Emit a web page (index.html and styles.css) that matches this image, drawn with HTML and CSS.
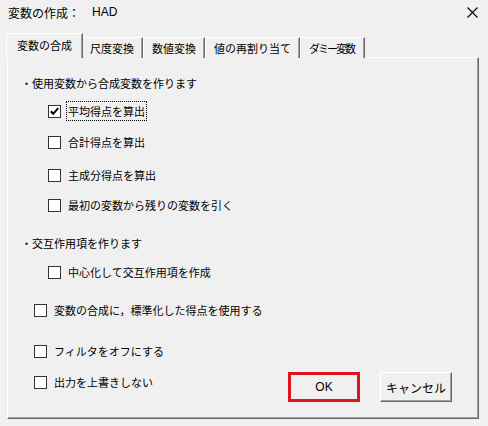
FILE: index.html
```html
<!DOCTYPE html>
<html>
<head>
    <title>変数の作成</title>
    <meta charset='utf-8'>
    <link rel="stylesheet" href="styles.css">
</head>
<body>
    <div class="dialog">
        <div class="titlebar">
            <span class="title">変数の作成：</span>
            <span class="title-name">HAD</span>
            <svg class="close" width="11" height="11" viewBox="0 0 11 11">
                <path d="M0.5 0.5 L10.5 10.5 M10.5 0.5 L0.5 10.5" stroke="#000" stroke-width="1.1" fill="none"/>
            </svg>
        </div>

        <div class="tabs">
            <div class="tab active">変数の合成</div>
            <div class="tab">尺度変換</div>
            <div class="tab">数値変換</div>
            <div class="tab">値の再割り当て</div>
            <div class="tab tab-narrow">ダミー変数</div>
        </div>

        <div class="panel">
            <div class="heading first">・使用変数から合成変数を作ります</div>

            <div class="check indent row-1">
                <span class="box">
                    <svg width="11" height="11" viewBox="0 0 11 11">
                        <path d="M1.8 5.2 L4.2 7.8 L9.2 2.2" stroke="#000" stroke-width="2" fill="none"/>
                    </svg>
                </span>
                <span class="label focus">平均得点を算出</span>
            </div>
            <div class="check indent row-2"><span class="box"></span><span class="label">合計得点を算出</span></div>
            <div class="check indent row-3"><span class="box"></span><span class="label">主成分得点を算出</span></div>
            <div class="check indent row-4"><span class="box"></span><span class="label">最初の変数から残りの変数を引く</span></div>

            <div class="heading second">・交互作用項を作ります</div>
            <div class="check indent row-5"><span class="box"></span><span class="label">中心化して交互作用項を作成</span></div>

            <div class="check row-6"><span class="box"></span><span class="label">変数の合成に，標準化した得点を使用する</span></div>
            <div class="check row-7"><span class="box"></span><span class="label">フィルタをオフにする</span></div>

            <div class="bottom-row">
                <div class="check"><span class="box"></span><span class="label">出力を上書きしない</span></div>
                <div class="buttons">
                    <button class="btn btn-ok">OK</button>
                    <button class="btn">キャンセル</button>
                </div>
            </div>
        </div>
    </div>
</body>
</html>
```

FILE: styles.css
```css
body {
    margin: 0;
    background: #f0f0f0;
    font-family: "Noto Sans CJK JP", "Noto Sans", sans-serif;
    font-size: 11px;
    color: #000;
}
.dialog {
    width: 488px;
    height: 426px;
    background: #f0f0f0;
}
.titlebar {
    height: 24px;
    display: flex;
    align-items: center;
    padding: 0 10px 0 8px;
    font-size: 12px;
}
.title-name {
    margin-left: 12px;
    font-family: "Liberation Sans", sans-serif;
    font-size: 12px;
}
.close {
    margin-left: auto;
}
.tabs {
    display: flex;
    align-items: flex-end;
    height: 24px;
    padding-left: 8px;
    margin-top: 10px;
    position: relative;
    z-index: 1;
}
.tab {
    height: 20px;
    line-height: 20px;
    padding: 0 8px;
    border-top: 1px solid #fff;
    border-left: 1px solid #fff;
    border-right: 1px solid #696969;
    box-shadow: inset -1px 0 #a0a0a0;
    background: #f0f0f0;
    white-space: nowrap;
}
.tab-narrow {
    letter-spacing: -2px;
    padding: 0 10px 0 8px;
}
.tab.active {
    height: 24px;
    line-height: 22px;
    margin: 0 -2px;
    padding: 0 10px;
    position: relative;
    z-index: 2;
}
.panel {
    box-sizing: border-box;
    margin: -1px 9px 0 7px;
    height: 362px;
    border-top: 1px solid #fff;
    border-left: 1px solid #fff;
    border-right: 1px solid #696969;
    border-bottom: 1px solid #696969;
    box-shadow: inset -1px -1px #a0a0a0;
    padding-top: 15px;
}
.heading {
    height: 20px;
    line-height: 20px;
    margin-left: 13px;
}
.heading.second {
    margin-top: 18px;
}
.check {
    display: flex;
    align-items: center;
    height: 20px;
    margin-left: 26px;
}
.check.indent {
    margin-left: 40px;
}
.row-1 { margin-top: 8px; }
.row-2 { margin-top: 11px; }
.row-3 { margin-top: 13px; }
.row-4 { margin-top: 10px; }
.row-5 { margin-top: 9px; }
.row-6 { margin-top: 18px; }
.row-7 { margin-top: 21px; }
.box {
    width: 11px;
    height: 11px;
    border: 1px solid #333;
    background: #fff;
    display: flex;
    align-items: center;
    justify-content: center;
    flex-shrink: 0;
}
.label {
    margin-left: 5px;
    line-height: 18px;
    padding: 0 1px;
    border: 1px dotted transparent;
}
.label.focus {
    border-color: #000;
}
.bottom-row {
    display: flex;
    align-items: flex-start;
    margin-top: 11px;
}
.bottom-row .check {
    margin-top: 0;
}
.buttons {
    display: flex;
    gap: 20px;
    margin-left: auto;
    margin-right: 26px;
}
.btn {
    width: 72px;
    height: 30px;
    background: #f0f0f0;
    border: 1px solid;
    border-color: #fff #696969 #696969 #fff;
    box-shadow: inset -1px -1px #a0a0a0;
    font-family: "Noto Sans CJK JP", "Noto Sans", sans-serif;
    font-size: 12px;
    color: #000;
    padding: 0;
}
.btn-ok {
    border: 3px solid #e0141e;
    box-shadow: none;
    font-family: "Liberation Sans", sans-serif;
}
```
